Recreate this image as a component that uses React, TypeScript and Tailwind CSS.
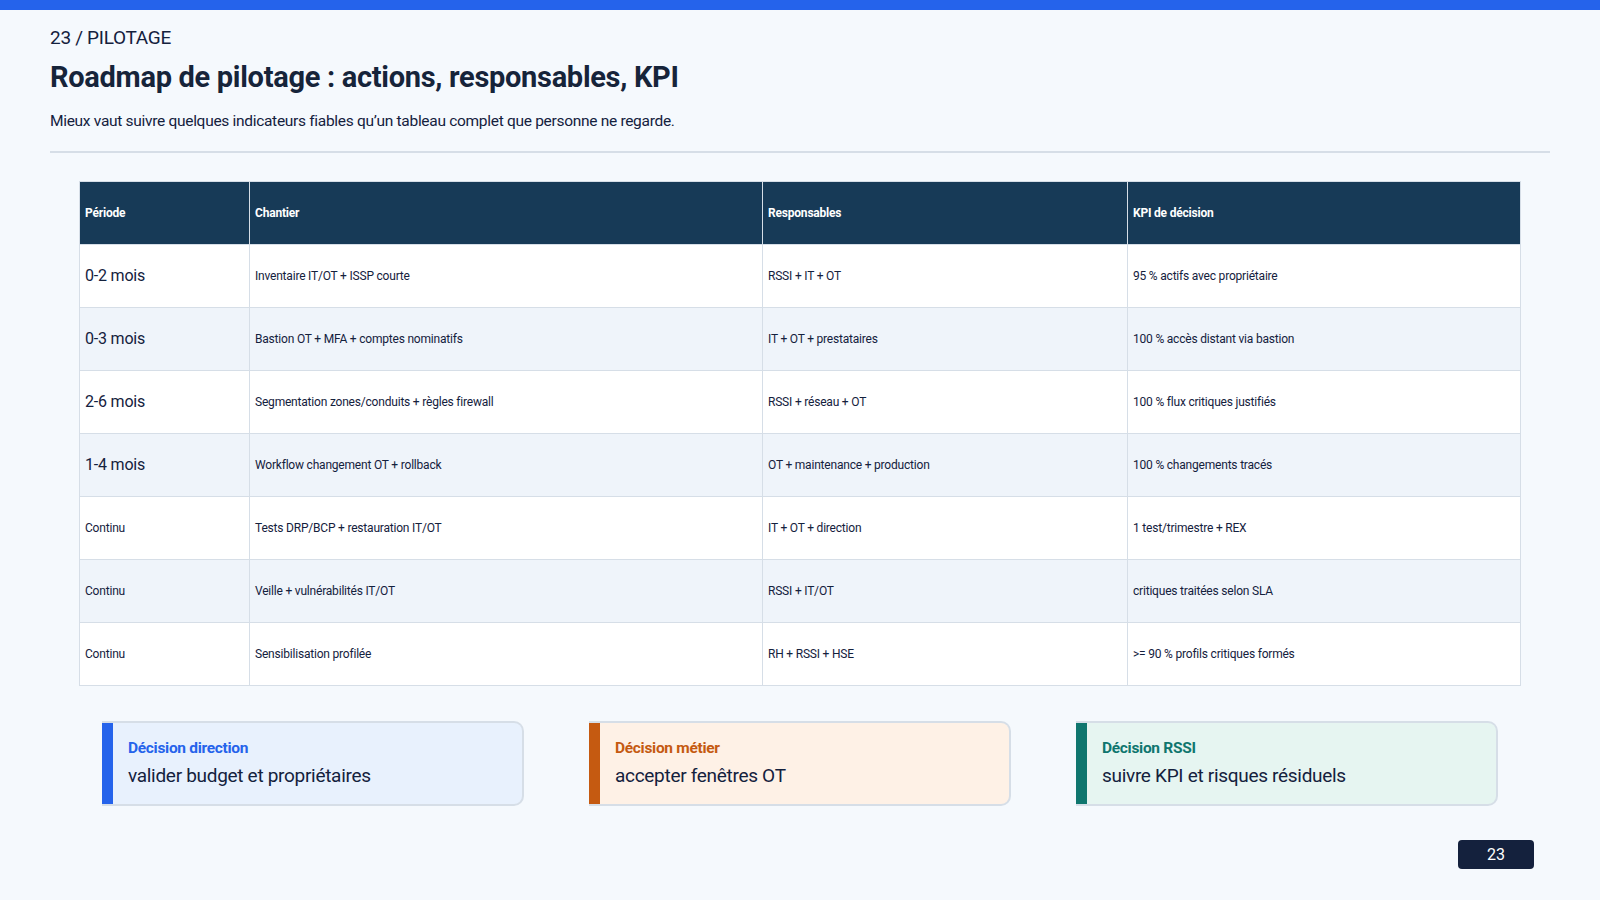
const rows = [
  ["0-2 mois", "Inventaire IT/OT + ISSP courte", "RSSI + IT + OT", "95 % actifs avec propriétaire", true],
  ["0-3 mois", "Bastion OT + MFA + comptes nominatifs", "IT + OT + prestataires", "100 % accès distant via bastion", true],
  ["2-6 mois", "Segmentation zones/conduits + règles firewall", "RSSI + réseau + OT", "100 % flux critiques justifiés", true],
  ["1-4 mois", "Workflow changement OT + rollback", "OT + maintenance + production", "100 % changements tracés", true],
  ["Continu", "Tests DRP/BCP + restauration IT/OT", "IT + OT + direction", "1 test/trimestre + REX", false],
  ["Continu", "Veille + vulnérabilités IT/OT", "RSSI + IT/OT", "critiques traitées selon SLA", false],
  ["Continu", "Sensibilisation profilée", "RH + RSSI + HSE", ">= 90 % profils critiques formés", false],
] as const;

const cards = [
  { t: "Décision direction", d: "valider budget et propriétaires", bar: "bg-[#2563eb]", bg: "bg-[#e8f1fd]", fg: "text-[#2563eb]" },
  { t: "Décision métier", d: "accepter fenêtres OT", bar: "bg-[#c55a11]", bg: "bg-[#fef1e6]", fg: "text-[#c55a11]" },
  { t: "Décision RSSI", d: "suivre KPI et risques résiduels", bar: "bg-[#0f766e]", bg: "bg-[#e6f5f1]", fg: "text-[#0f766e]" },
];

export default function App() {
  return (
    <div className="w-[1600px] h-[900px] bg-[#f5f9fd] flex flex-col text-[#14213d] overflow-hidden" style={{ fontFamily: "Roboto, 'Liberation Sans', sans-serif" }}>
      <div className="h-[10px] bg-[#2563eb] shrink-0" />
      <div className="px-[50px] flex flex-col flex-1">
        <div className="mt-[16px] text-[19px] tracking-[-0.3px] leading-[24px]">23 / PILOTAGE</div>
        <h1 className="mt-[9px] text-[29px] font-bold leading-[36px] tracking-[-0.3px] text-[#16243a]">Roadmap de pilotage : actions, responsables, KPI</h1>
        <p className="mt-[16px] text-[15.5px] leading-[20px] tracking-[-0.3px]">Mieux vaut suivre quelques indicateurs fiables qu’un tableau complet que personne ne regarde.</p>
        <div className="mt-[20px] h-[2px] bg-[#d6dee7]" />
        <div className="mx-[29px] mt-[28px]">
          <table className="w-full border-collapse text-[12px] tracking-[-0.2px]">
            <colgroup>
              <col className="w-[170px]" />
              <col className="w-[513px]" />
              <col className="w-[365px]" />
              <col />
            </colgroup>
            <thead>
              <tr className="h-[63px] bg-[#173a57] text-white font-bold text-left">
                {["Période", "Chantier", "Responsables", "KPI de décision"].map((h) => (
                  <th key={h} className="px-[5px] border border-[#d6dee7] font-bold">{h}</th>
                ))}
              </tr>
            </thead>
            <tbody>
              {rows.map((r, i) => (
                <tr key={i} className={`h-[63px] ${i % 2 ? "bg-[#eff4fa]" : "bg-white"}`}>
                  <td className={`px-[5px] border border-[#d6dee7] ${r[4] ? "text-[16px]" : ""}`}>{r[0]}</td>
                  <td className="px-[5px] border border-[#d6dee7]">{r[1]}</td>
                  <td className="px-[5px] border border-[#d6dee7]">{r[2]}</td>
                  <td className="px-[5px] border border-[#d6dee7]">{r[3]}</td>
                </tr>
              ))}
            </tbody>
          </table>
        </div>
        <div className="mt-[35px] mx-[52px] grid grid-cols-3 gap-[65px]">
          {cards.map((c) => (
            <div key={c.t} className={`h-[85px] flex rounded-r-[10px] border-2 border-l-0 border-[#d6dee7] ${c.bg} overflow-hidden`}>
              <div className={`w-[11px] ${c.bar}`} />
              <div className="pl-[15px] flex flex-col justify-center tracking-[-0.3px]">
                <div className={`text-[15.5px] font-bold ${c.fg}`}>{c.t}</div>
                <div className="text-[19px] mt-[2px]">{c.d}</div>
              </div>
            </div>
          ))}
        </div>
        <div className="mt-[34px] self-end mr-[16px] w-[76px] h-[29px] rounded-[4px] bg-[#14213d] text-white text-[16px] flex items-center justify-center">23</div>
      </div>
    </div>
  );
}
